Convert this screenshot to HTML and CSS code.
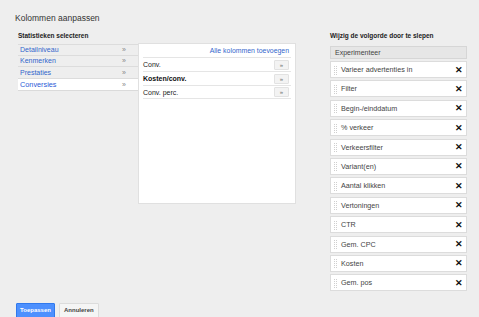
FILE: index.html
```html
<!doctype html>
<html lang="nl">
<head>
    <meta charset="UTF-8">
    <title>Kolommen aanpassen</title>
    <link rel="stylesheet" href="styles.css">
</head>
<body>
    <div class="dialog">
        <div class="dialog-title">Kolommen aanpassen</div>

        <div class="dialog-columns">
            <!-- linkerkant: statistieken kiezen -->
            <div class="selector">
                <div class="section-title">Statistieken selecteren</div>
                <div class="selector-body">
                    <ul class="nav">
                        <li class="nav-item">Detailniveau <span class="nav-arrow">»</span></li>
                        <li class="nav-item">Kenmerken <span class="nav-arrow">»</span></li>
                        <li class="nav-item">Prestaties <span class="nav-arrow">»</span></li>
                        <li class="nav-item nav-item-active">Conversies <span class="nav-arrow">»</span></li>
                    </ul>
                    <div class="panel">
                        <div class="panel-add">Alle kolommen toevoegen</div>
                        <div class="metric">Conv.<span class="metric-btn">»</span></div>
                        <div class="metric metric-bold">Kosten/conv.<span class="metric-btn">»</span></div>
                        <div class="metric">Conv. perc.<span class="metric-btn">»</span></div>
                    </div>
                </div>
            </div>

            <!-- rechterkant: volgorde -->
            <div class="order">
                <div class="section-title">Wijzig de volgorde door te slepen</div>
                <div class="order-fixed">Experimenteer</div>
                <ul class="order-list">
                    <li class="order-item"><span class="grip"></span>Varieer advertenties in<span class="remove">✕</span></li>
                    <li class="order-item"><span class="grip"></span>Filter<span class="remove">✕</span></li>
                    <li class="order-item"><span class="grip"></span>Begin-/einddatum<span class="remove">✕</span></li>
                    <li class="order-item"><span class="grip"></span>% verkeer<span class="remove">✕</span></li>
                    <li class="order-item"><span class="grip"></span>Verkeersfilter<span class="remove">✕</span></li>
                    <li class="order-item"><span class="grip"></span>Variant(en)<span class="remove">✕</span></li>
                    <li class="order-item"><span class="grip"></span>Aantal klikken<span class="remove">✕</span></li>
                    <li class="order-item"><span class="grip"></span>Vertoningen<span class="remove">✕</span></li>
                    <li class="order-item"><span class="grip"></span>CTR<span class="remove">✕</span></li>
                    <li class="order-item"><span class="grip"></span>Gem. CPC<span class="remove">✕</span></li>
                    <li class="order-item"><span class="grip"></span>Kosten<span class="remove">✕</span></li>
                    <li class="order-item"><span class="grip"></span>Gem. pos<span class="remove">✕</span></li>
                </ul>
            </div>
        </div>

        <div class="dialog-footer">
            <button class="btn btn-primary">Toepassen</button>
            <button class="btn">Annuleren</button>
        </div>
    </div>
</body>
</html>
```

FILE: styles.css
```css
* {
    box-sizing: border-box;
}

html,
body {
    margin: 0;
    height: 100%;
}

body {
    background-color: #eeeeee;
    font-family: "Liberation Sans", Arial, sans-serif;
    color: #222;
    overflow: hidden;
}

.dialog {
    padding: 13px 0 0 15px;
    width: 479px;
    height: 317px;
}

.dialog-title {
    font-size: 8.5px;
    line-height: 11px;
    color: #333;
}

.dialog-columns {
    display: flex;
    margin-top: 7px;
}

.section-title {
    font-size: 6.5px;
    font-weight: bold;
    line-height: 9px;
    color: #222;
}

/* linkerkant */
.selector {
    padding-left: 3px;
    width: 281px;
}

.selector .section-title {
    margin-bottom: 3px;
}

.selector-body {
    display: flex;
}

.nav {
    list-style: none;
    margin: 1px 0 0;
    padding: 0;
    width: 120px;
}

.nav-item {
    display: flex;
    justify-content: space-between;
    align-items: center;
    height: 11.5px;
    padding: 0 12px 0 2px;
    border-bottom: 1px solid #dcdcdc;
    font-size: 7px;
    color: #3366cc;
}

.nav-item:first-child {
    border-top: 1px solid #dcdcdc;
}

.nav-item-active {
    height: 12px;
    background-color: #fff;
    color: #2a5bd7;
    font-size: 7.3px;
    border-bottom: 1px solid #dadada;
}

.nav-arrow {
    color: #888;
    font-size: 7px;
}

.panel {
    width: 158px;
    height: 161px;
    padding: 0 4px;
    background-color: #fff;
    border: 1px solid #e0e0e0;
}

.panel-add {
    height: 13px;
    padding: 3px 2px 0 0;
    text-align: right;
    font-size: 6.9px;
    color: #3366cc;
}

.metric {
    display: flex;
    justify-content: space-between;
    align-items: center;
    height: 14px;
    border-top: 1px solid #e5e5e5;
    font-size: 7px;
    color: #222;
}

.metric:last-child {
    border-bottom: 1px solid #e5e5e5;
}

.metric-bold {
    font-weight: bold;
    color: #111;
}

.metric-btn {
    width: 15px;
    height: 10px;
    margin-right: 2px;
    line-height: 9px;
    text-align: center;
    font-size: 6px;
    font-weight: normal;
    color: #666;
    background-color: #f3f3f3;
    border: 1px solid #e2e2e2;
    border-radius: 1px;
}

/* rechterkant */
.order {
    margin-left: 34px;
    width: 137px;
}

.order .section-title {
    margin-bottom: 6px;
}

.order-fixed {
    height: 13px;
    padding-left: 4px;
    line-height: 11px;
    font-size: 7px;
    color: #444;
    background-color: #e6e6e6;
    border: 1px solid #d6d6d6;
}

.order-list {
    list-style: none;
    margin: 2px 0 0;
    padding: 0;
}

.order-item {
    display: flex;
    align-items: center;
    height: 17px;
    margin-bottom: 2.4px;
    padding: 0 3px 0 3px;
    background-color: #fff;
    border: 1px solid #dcdcdc;
    font-size: 7.2px;
    color: #444;
}

/* sleepgreep: twee kolommen lichte puntjes */
.grip {
    width: 3px;
    height: 10px;
    margin-right: 4px;
    background-image:
        linear-gradient(#fff 50%, transparent 50%),
        linear-gradient(90deg, #cfcfcf 50%, transparent 50%);
    background-size: 2px 2px;
}

.remove {
    margin-left: auto;
    font-size: 9px;
    font-weight: bold;
    color: #111;
}

.dialog-footer {
    display: flex;
    gap: 4px;
    margin-top: 9px;
    padding-left: 1px;
}

.btn {
    height: 15px;
    padding: 0 4px;
    font-family: "Liberation Sans", Arial, sans-serif;
    font-size: 6px;
    font-weight: bold;
    color: #444;
    background-color: #f5f5f5;
    border: 1px solid #dcdcdc;
    border-radius: 1px;
}

.btn-primary {
    width: 39px;
    padding: 0;
    color: #fff;
    background-color: #4d90fe;
    border-color: #3079ed;
}
```
